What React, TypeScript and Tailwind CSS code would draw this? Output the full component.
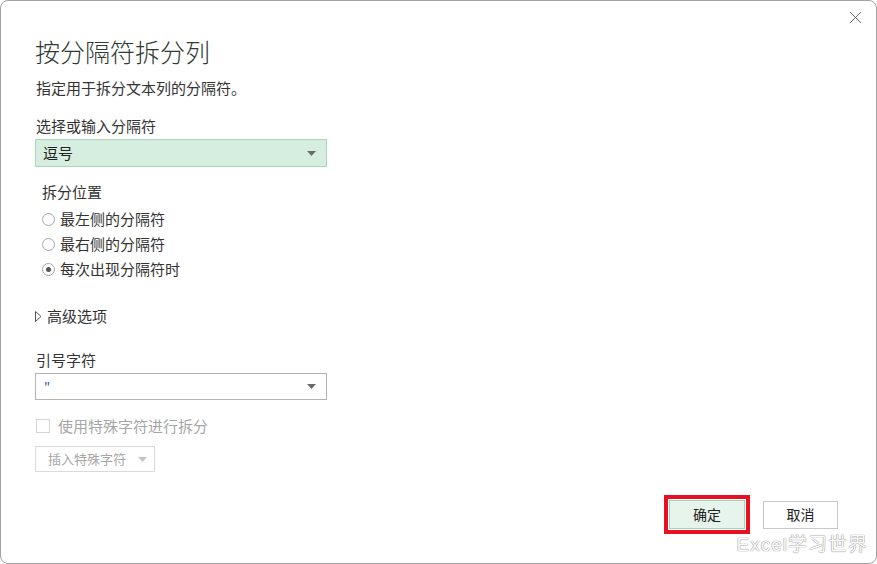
import { X } from "lucide-react";

const FONT = "font-['Microsoft_YaHei','Noto_Sans_CJK_SC',sans-serif]";

function Caret({ color = "#6b6b6b" }: { color?: string }) {
  return (
    <svg width="9" height="5" viewBox="0 0 9 5">
      <path d="M0 0 H9 L4.5 5 Z" fill={color} />
    </svg>
  );
}

function Radio({ label, checked }: { label: string; checked?: boolean }) {
  return (
    <div className="flex items-center h-[25px]">
      <span className="w-[13px] h-[13px] rounded-full border border-[#a6a6a6] bg-white flex items-center justify-center">
        {checked && <span className="w-[5px] h-[5px] rounded-full bg-[#555]" />}
      </span>
      <span className="ml-[5px] text-[15px] text-[#333]">{label}</span>
    </div>
  );
}

export default function App() {
  return (
    <div className={`w-[877px] h-[564px] bg-white ${FONT}`}>
      <div className="relative w-full h-full border border-[#a3a3a3] rounded-[8px] bg-white overflow-hidden">
        <button className="absolute right-[10px] top-[6px] text-[#555]">
          <X size={21} strokeWidth={1} />
        </button>

        <div className="pl-[34px] pt-[33px] flex flex-col">
          <h1 className="text-[25px] leading-[34px] font-light text-[#2e3a34]">按分隔符拆分列</h1>
          <p className="mt-[10px] text-[15px] leading-[20px] text-[#333] ml-[1px]">指定用于拆分文本列的分隔符。</p>

          <label className="mt-[18px] text-[15px] leading-[20px] text-[#333] ml-[1px]">选择或输入分隔符</label>
          <div className="mt-[3px] w-[292px] h-[28px] border border-[#a9d9bd] bg-[#d6eee0] flex items-center justify-between pl-[7px] pr-[10px]">
            <span className="text-[15px] text-[#222]">逗号</span>
            <Caret />
          </div>

          <div className="mt-[15px] ml-[7px] text-[15px] leading-[20px] text-[#333]">拆分位置</div>
          <div className="ml-[7px] mt-[5px] flex flex-col">
            <Radio label="最左侧的分隔符" />
            <Radio label="最右侧的分隔符" />
            <Radio label="每次出现分隔符时" checked />
          </div>

          <div className="mt-[24px] flex items-center h-[20px]">
            <svg width="7" height="11" viewBox="0 0 7 11">
              <path d="M0.5 0.5 L6 5.5 L0.5 10.5 Z" fill="none" stroke="#555" strokeWidth="1" />
            </svg>
            <span className="ml-[5px] text-[15px] text-[#333]">高级选项</span>
          </div>

          <label className="mt-[24px] text-[15px] leading-[20px] text-[#333] ml-[1px]">引号字符</label>
          <div className="mt-[3px] w-[292px] h-[27px] border border-[#b3b3b3] bg-white flex items-center justify-between pl-[8px] pr-[10px]">
            <span className="text-[13px] text-[#2b5aa8]">"</span>
            <Caret />
          </div>

          <div className="mt-[18px] flex items-center h-[16px]">
            <span className="ml-[1px] w-[14px] h-[14px] border border-[#d4d4d4] bg-white" />
            <span className="ml-[8px] text-[15px] text-[#a6a6a6]">使用特殊字符进行拆分</span>
          </div>

          <div className="mt-[12px] w-[120px] h-[26px] border border-[#dadada] bg-white flex items-center pl-[12px] gap-[12px]">
            <span className="text-[13px] text-[#a6a6a6]">插入特殊字符</span>
            <Caret color="#c4c4c4" />
          </div>
        </div>

        <div className="absolute right-[38px] bottom-[29px] flex items-center gap-[13px]">
          <div className="border-[4px] border-[#e81123] p-[1px]">
            <button className="w-[76px] h-[29px] border border-[#a3d4b5] bg-[#e6f4ec] text-[14px] text-[#222]">确定</button>
          </div>
          <button className="w-[75px] h-[28px] border border-[#c9c9c9] bg-white text-[14px] text-[#222]">取消</button>
        </div>

        <div className="absolute right-[8px] bottom-[6px] text-[19px] leading-[24px] tracking-[1px] text-[#fafafa] font-['Liberation_Sans','Noto_Sans_CJK_SC',sans-serif] [text-shadow:0_0_1px_#8a8a8a,0_0_1px_#8a8a8a]">
          Excel学习世界
        </div>
      </div>
    </div>
  );
}
